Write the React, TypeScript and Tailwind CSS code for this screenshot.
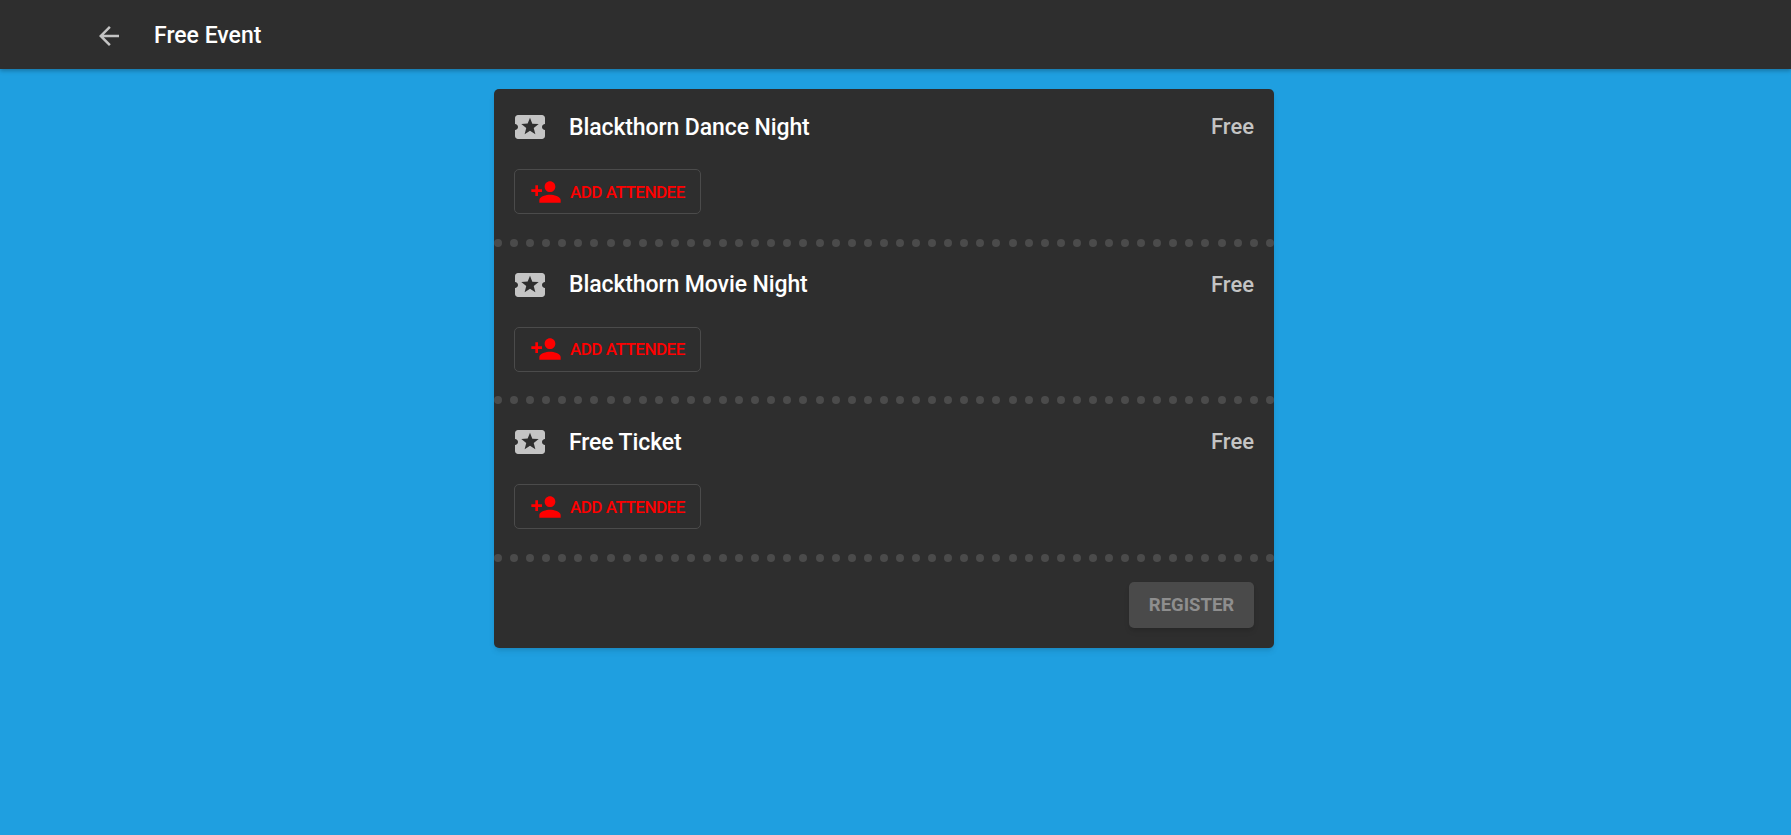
const tickets = ["Blackthorn Dance Night", "Blackthorn Movie Night", "Free Ticket"];

function TicketIcon() {
  return (
    <svg viewBox="0 0 24 24" className="w-9 h-9 fill-[#c4c4c4] shrink-0">
      <path d="M20 12c0-1.1.9-2 2-2V6c0-1.1-.9-2-2-2H4c-1.1 0-1.99.9-1.99 2v4c1.1 0 1.99.9 1.99 2s-.89 2-2 2v4c0 1.1.9 2 2 2h16c1.1 0 2-.9 2-2v-4c-1.1 0-2-.9-2-2zm-4.42 4.8L12 14.5l-3.58 2.3 1.08-4.12-3.29-2.69 4.24-.25L12 5.8l1.54 3.95 4.24.25-3.29 2.69 1.09 4.11z" />
    </svg>
  );
}

function PersonAddIcon() {
  return (
    <svg viewBox="0 0 24 24" className="w-8 h-8 fill-[#ff0000] shrink-0">
      <path d="M15 12c2.21 0 4-1.79 4-4s-1.79-4-4-4-4 1.79-4 4 1.79 4 4 4zm-9-2V7H4v3H1v2h3v3h2v-3h3v-2H6zm9 4c-2.67 0-8 1.34-8 4v2h16v-2c0-2.66-5.33-4-8-4z" />
    </svg>
  );
}

function DottedDivider() {
  return (
    <div className="flex justify-between h-2">
      {Array.from({ length: 49 }).map((_, i) => (
        <span key={i} className="w-2 h-2 shrink-0 rounded-full bg-[#4b4b4b]" />
      ))}
    </div>
  );
}

export default function App() {
  return (
    <div className="min-h-[835px] bg-[#1f9fe0] font-['Roboto',sans-serif]">
      {/* Header */}
      <header className="h-[69px] bg-[#2e2e2e] flex items-center pl-[94px] shadow-[0_2px_4px_rgba(0,0,0,0.25)]">
        <svg viewBox="0 0 24 24" className="w-[30px] h-[30px] mt-[2px] fill-[#c4c4c4]">
          <path d="M20 11H7.83l5.59-5.59L12 4l-8 8 8 8 1.41-1.41L7.83 13H20v-2z" />
        </svg>
        <h1 className="ml-[30px] pt-1 text-[23px] font-medium text-white">Free Event</h1>
      </header>

      {/* Card */}
      <main className="flex justify-center pt-5 pr-[23px]">
        <div className="w-[780px] bg-[#2e2e2e] rounded-[5px] shadow-md">
          {tickets.map((name) => (
            <div key={name}>
              <div className="px-5 pt-[19px] pb-[24.6px]">
                <div className="flex items-center h-9">
                  <div className="-ml-[2px] mt-[2px]">
                    <TicketIcon />
                  </div>
                  <span className="ml-[21px] pt-1 text-[23px] tracking-[-0.1px] font-medium text-white">{name}</span>
                  <span className="ml-auto pt-[1px] text-[22px] font-medium text-[#c4c4c4]">Free</span>
                </div>
                <button className="mt-[25px] flex items-center h-[45px] w-[187px] pl-[15px] border border-[#4b4b4b] rounded-[5px]">
                  <PersonAddIcon />
                  <span className="ml-2 pt-[2px] text-[17px] tracking-[-0.5px] font-medium text-[#ff0000]">ADD ATTENDEE</span>
                </button>
              </div>
              <DottedDivider />
            </div>
          ))}
          <div className="flex justify-end px-5 pt-5 pb-5">
            <button className="w-[125px] h-[46px] pt-[2px] rounded-[5px] bg-[#4a4a4a] text-[#8e8e8e] text-[18.5px] font-bold shadow-md">
              REGISTER
            </button>
          </div>
        </div>
      </main>
    </div>
  );
}
